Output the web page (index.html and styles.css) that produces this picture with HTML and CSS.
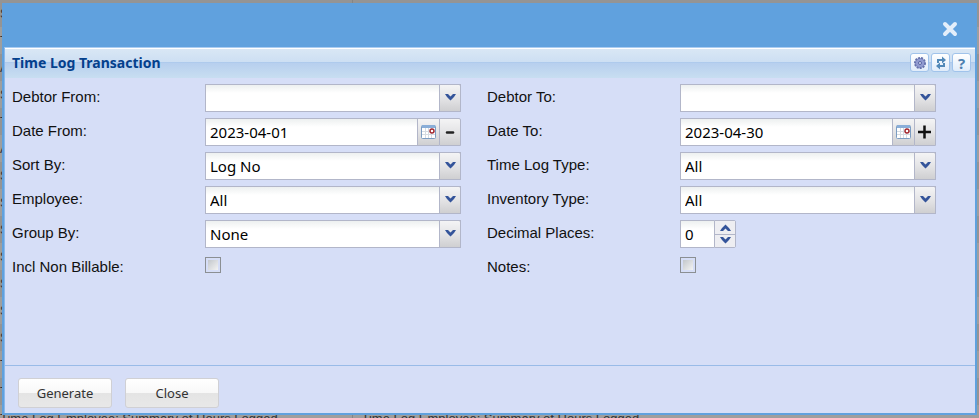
FILE: index.html
```
<!DOCTYPE html>
<html lang="en">
<head>
	<meta charset="UTF-8">
	<title>Time Log Transaction</title>
	<link rel="stylesheet" href="styles.css">
</head>
<body>
<svg class="defs" aria-hidden="true">
	<symbol id="arrow" viewBox="0 0 11 7"><path d="M0 0h3l2.500 2.500L8 0h3L9 3 5.500 6.500 2 3z" fill="#34549a"/></symbol>
	<symbol id="calendar" viewBox="0 0 16 16">
		<rect x=".5" y="1.500" width="14" height="13" rx="1" fill="#fff" stroke="#7b9cc2"/>
		<path d="M1 1h13v3H1z" fill="#8aaed8"/>
		<path d="M1 7.500h13M1 10.500h13M4.500 4v10M7.500 4v10M10.500 4v10" stroke="#d5dbe2"/>
		<circle cx="11" cy="7" r="2" fill="#fff" stroke="#a3252c" stroke-width="1.400"/>
	</symbol>
</svg>

<!-- report list under the dialog -->
<table class="list" aria-hidden="true">
	<tr><td>S</td><td></td></tr>
	<tr><td>T</td><td></td></tr>
	<tr><td>A</td><td></td></tr>
	<tr><td>S</td><td></td></tr>
	<tr><td>T</td><td></td></tr>
	<tr><td>A</td><td></td></tr>
	<tr><td>S</td><td></td></tr>
	<tr><td>S</td><td></td></tr>
	<tr><td>S</td><td></td></tr>
	<tr><td>S</td><td></td></tr>
	<tr><td>S</td><td></td></tr>
	<tr><td>S</td><td></td></tr>
	<tr><td>S</td><td></td></tr>
	<tr><td>T</td><td></td></tr>
	<tr><td>T</td><td></td></tr>
	<tr><td>Time Log Employee: Summary of Hours Logged</td><td>Time Log Employee: Summary of Hours Logged</td></tr>
</table>

<div class="dialog" role="dialog" aria-labelledby="title">
	<div class="dialog-bar">
		<button class="close" type="button" aria-label="Close dialog">
			<svg width="16" height="16" viewBox="0 0 16 16"><path d="M3 3l10 10M13 3L3 13" stroke="#e3eefa" stroke-width="4" stroke-linecap="round"/></svg>
		</button>
	</div>
	<form class="panel">
		<header class="panel-head">
			<h1 id="title">Time Log Transaction</h1>
			<button class="tool" type="button" aria-label="Settings">
				<svg width="14" height="14" viewBox="0 0 14 14"><circle cx="7" cy="7" r="5" fill="#8590c8" stroke="#6672ac" stroke-width="2" stroke-dasharray="2 1"/><circle cx="7" cy="7" r="4" fill="#919bd0"/><circle cx="7" cy="7" r="1.500" fill="#d9def2" stroke="#5865a3"/></svg>
			</button>
			<button class="tool" type="button" aria-label="Refresh">
				<svg width="14" height="14" viewBox="0 0 14 14" fill="none" stroke="#5289b8" stroke-width="2"><path d="M4 7V4h4M10 7v3H6"/><path d="M8 .5L12 4 8 7.500zM6 6.500L2 10l4 3.500z" fill="#5289b8" stroke="none"/></svg>
			</button>
			<button class="tool" type="button" aria-label="Help">?</button>
		</header>
		<div class="fields">
			<div class="field">
				<label for="debtorFrom">Debtor From:</label>
				<div class="combo"><select id="debtorFrom"><option></option></select><span class="trigger"><svg width="11" height="7"><use href="#arrow"/></svg></span></div>
			</div>
			<div class="field">
				<label for="debtorTo">Debtor To:</label>
				<div class="combo"><select id="debtorTo"><option></option></select><span class="trigger"><svg width="11" height="7"><use href="#arrow"/></svg></span></div>
			</div>
			<div class="field">
				<label for="dateFrom">Date From:</label>
				<div class="date">
					<input id="dateFrom" type="text" value="2023-04-01">
					<button class="trigger" type="button" aria-label="Pick date from"><svg width="16" height="16"><use href="#calendar"/></svg></button>
					<button class="trigger" type="button" aria-label="Previous"><svg width="14" height="14"><path d="M4 7.500h6" stroke="#222" stroke-width="2.500" stroke-linecap="round"/></svg></button>
				</div>
			</div>
			<div class="field">
				<label for="dateTo">Date To:</label>
				<div class="date">
					<input id="dateTo" type="text" value="2023-04-30">
					<button class="trigger" type="button" aria-label="Pick date to"><svg width="16" height="16"><use href="#calendar"/></svg></button>
					<button class="trigger" type="button" aria-label="Next"><svg width="14" height="14"><path d="M0 7h13M6.500 .5v13" stroke="#111" stroke-width="2.500"/></svg></button>
				</div>
			</div>
			<div class="field">
				<label for="sortBy">Sort By:</label>
				<div class="combo"><select id="sortBy"><option>Log No</option></select><span class="trigger"><svg width="11" height="7"><use href="#arrow"/></svg></span></div>
			</div>
			<div class="field">
				<label for="logType">Time Log Type:</label>
				<div class="combo"><select id="logType"><option>All</option></select><span class="trigger"><svg width="11" height="7"><use href="#arrow"/></svg></span></div>
			</div>
			<div class="field">
				<label for="employee">Employee:</label>
				<div class="combo"><select id="employee"><option>All</option></select><span class="trigger"><svg width="11" height="7"><use href="#arrow"/></svg></span></div>
			</div>
			<div class="field">
				<label for="inventoryType">Inventory Type:</label>
				<div class="combo"><select id="inventoryType"><option>All</option></select><span class="trigger"><svg width="11" height="7"><use href="#arrow"/></svg></span></div>
			</div>
			<div class="field">
				<label for="groupBy">Group By:</label>
				<div class="combo"><select id="groupBy"><option>None</option></select><span class="trigger"><svg width="11" height="7"><use href="#arrow"/></svg></span></div>
			</div>
			<div class="field">
				<label for="decimals">Decimal Places:</label>
				<div class="spinner">
					<input id="decimals" type="text" value="0">
					<div class="spin-buttons">
						<button type="button" aria-label="Increase"><svg class="up" width="11" height="7"><use href="#arrow"/></svg></button>
						<button type="button" aria-label="Decrease"><svg width="11" height="7"><use href="#arrow"/></svg></button>
					</div>
				</div>
			</div>
			<div class="field">
				<label for="nonBillable">Incl Non Billable:</label>
				<input id="nonBillable" type="checkbox">
			</div>
			<div class="field">
				<label for="notes">Notes:</label>
				<input id="notes" type="checkbox">
			</div>
		</div>
		<footer class="actions">
			<button type="submit">Generate</button>
			<button type="button">Close</button>
		</footer>
	</form>
</div>
</body>
</html>
```
FILE: styles.css
```
* {
	box-sizing: border-box;
}

html, body {
	height: 100%;
	margin: 0;
}

body {
	background: #9e9e9e;
	font: 15px/20px "Liberation Sans", Arial, sans-serif;
	color: #111;
	overflow: hidden;
}

button, input, select {
	margin: 0;
	padding: 0;
	border: 0;
	border-radius: 0;
	font: 15px/20px "Noto Sans", Tahoma, sans-serif;
	color: #000;
}

svg {
	display: block;
}

.defs {
	display: none;
}

.list {
	width: 100%;
	border-collapse: collapse;
	font-size: 13px;
	color: #333;
}

.list tr {
	height: 27px;
}

.list tr:nth-child(odd) {
	background: #949494;
}

.list td {
	padding: 0;
	line-height: 16px;
}

.list td:first-child {
	width: 352px;
	border-right: 1px solid #858585;
}

.list td:last-child {
	padding-left: 9px;
}

/* modal over the list */
.dialog {
	position: fixed;
	inset: 3px 2px 3px 2px;
	display: flex;
	flex-direction: column;
	padding: 0 2px 2px;
	background: #60a1de;
}

.dialog-bar {
	display: flex;
	justify-content: flex-end;
	align-items: center;
	height: 44px;
	padding: 8px 17px 0 0;
}

.close {
	background: none;
	cursor: pointer;
}

.panel {
	flex: 1;
	display: flex;
	flex-direction: column;
	border-top: 1px solid #a9ccf2;
	border-left: 1px solid #8ab7ea;
	background: #d6def7;
}

.panel-head {
	display: flex;
	align-items: center;
	gap: 2px;
	height: 30px;
	padding: 0 4px 2px 7px;
	border-top: 1px solid #fff;
	background: linear-gradient(#d9e7f5, #cddff3 13px, #a6c6eb 13px, #b7cfee 14px, #c8def1);
}

.panel-head h1 {
	flex: 1;
	margin: 0;
	font: bold 14px/20px "Noto Sans", Tahoma, sans-serif;
	color: #04408c;
}

.tool {
	display: flex;
	justify-content: center;
	align-items: center;
	width: 19px;
	height: 19px;
	border: 1px solid #a0c3eb;
	border-radius: 3px;
	background: linear-gradient(#fff, #e0ecfa);
	font: bold 15px/16px "Noto Sans", Tahoma, sans-serif;
	color: #4d80b0;
}

.fields {
	flex: 1;
	display: grid;
	grid-template-columns: 1fr 1fr;
	grid-auto-rows: 28px;
	align-content: start;
	row-gap: 6px;
	padding: 6px 13px 6px 7px;
}

.field {
	display: grid;
	grid-template-columns: 193px 256px;
}

.field label {
	padding-top: 3px;
}

.combo {
	display: grid;
}

.combo select, .combo .trigger {
	grid-area: 1 / 1;
}

.combo .trigger {
	justify-self: end;
	pointer-events: none;
}

select, input[type=text] {
	width: 100%;
	min-width: 0;
	height: 28px;
	padding: 0 4px;
	border: 1px solid #b2b6c9;
	background: linear-gradient(#edf0f0, #fff 8px);
	appearance: none;
}

.date, .spinner {
	display: flex;
}

.date input[type=text], .spinner input[type=text] {
	flex: 1;
	border-right: 0;
}

.trigger {
	display: flex;
	justify-content: center;
	align-items: center;
	width: 22px;
	height: 28px;
	border: 1px solid #b2b6c9;
	border-top-right-radius: 2px;
	background: linear-gradient(#f4f4f5, #e4e4e6 50%, #cfcfd1);
}

.date .trigger:nth-child(2) {
	border-right: 0;
	border-radius: 0;
}

.combo .trigger svg {
	margin-bottom: 2px;
}

.spinner {
	width: 56px;
}

.spin-buttons {
	display: flex;
	flex-direction: column;
	width: 22px;
	border: 1px solid #b2b6c9;
	border-radius: 0 2px 2px 0;
}

.spin-buttons button {
	flex: 1;
	display: flex;
	justify-content: center;
	align-items: center;
	background: #eeeef2;
}

.spin-buttons button + button {
	border-top: 1px solid #b2b6c9;
}

.up {
	transform: rotate(180deg);
}

input[type=checkbox] {
	appearance: none;
	width: 16px;
	height: 16px;
	margin-top: 3px;
	border: 1px solid #8b8f93;
	background: linear-gradient(135deg, #c3c7cc, #f3f3f3) content-box #dcdcdc;
	padding: 2px;
}

.actions {
	display: flex;
	gap: 13px;
	padding: 12px 13px 5px;
	border-top: 1px solid #99bbe8;
}

.actions button {
	width: 94px;
	height: 30px;
	border: 1px solid #d0d0d4;
	border-radius: 3px;
	background: linear-gradient(#fff, #f8f8f8 50%, #e4e4e4 50%, #e8e8e8);
	font-size: 13px;
	color: #333;
}
```
